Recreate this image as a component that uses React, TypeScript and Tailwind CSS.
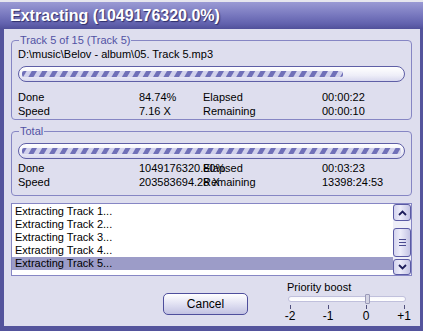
import React from "react";

const stripes =
  "bg-[repeating-linear-gradient(120deg,#7070b8_0px,#7070b8_3.5px,#d2d2ec_4.5px,#d2d2ec_8px,#7070b8_9px)]";

function ProgressBar({ pct }: { pct: number }) {
  return (
    <div className="h-[16px] rounded-full border border-[#5f5fa6] bg-[linear-gradient(180deg,#ffffff_0%,#eeeef8_60%,#d8d8ee_100%)] px-[3px] py-[4px]">
      <div className={`h-full ${stripes} rounded-[2px]`} style={{ width: pct + "%" }} />
    </div>
  );
}

function StatRow({ a, b, c, d }: { a: string; b: string; c: string; d: string }) {
  return (
    <div className="flex leading-[14px] whitespace-nowrap">
      <div className="w-[121px]">{a}</div>
      <div className="w-[64px] overflow-visible">{b}</div>
      <div className="w-[119px]">{c}</div>
      <div>{d}</div>
    </div>
  );
}

function Chevron({ up }: { up?: boolean }) {
  return (
    <svg width="9" height="6" viewBox="0 0 9 6">
      <path
        d={up ? "M1 5 L4.5 1.5 L8 5" : "M1 1 L4.5 4.5 L8 1"}
        fill="none"
        stroke="#1c1c5a"
        strokeWidth="1.8"
      />
    </svg>
  );
}

const btn =
  "border border-[#5a5aa4] rounded-[3px] bg-[linear-gradient(90deg,#d4d4ee_0%,#ececfa_40%,#c4c4e4_100%)] flex items-center justify-center";

export default function App() {
  const tracks = [1, 2, 3, 4, 5];
  return (
    <div
      className="w-[423px] h-[331px] bg-[#54549c] flex flex-col text-[11px] text-black"
      style={{ fontFamily: '"Liberation Sans", Arial, sans-serif' }}
    >
      <div className="h-[2px] bg-[#e6e6ee]" />
      <div className="h-[27px] flex items-center pl-[10px] bg-[linear-gradient(180deg,#9a9ad4_0%,#7a7ac0_45%,#6262ae_80%,#50509a_100%)]">
        <span className="text-white font-bold text-[16px] [text-shadow:1px_1px_1px_#2e2e6a]">
          Extracting (1049176320.0%)
        </span>
      </div>

      <div className="flex-1 ml-[4px] mr-[3px] mb-[5px] bg-[#dedeee] pt-[4px] flex flex-col">
        <fieldset className="ml-[7px] mr-[8px] border border-[#8686c4] rounded-[4px] px-[6px] pb-[1px]">
          <legend className="ml-[1px] px-[1px] leading-[14px] text-[#5252a4]">Track 5 of 15 (Track 5)</legend>
          <div className="leading-[14px]">D:\music\Belov - album\05. Track 5.mp3</div>
          <div className="mt-[5px]">
            <ProgressBar pct={84.74} />
          </div>
          <div className="mt-[8px]">
            <StatRow a="Done" b="84.74%" c="Elapsed" d="00:00:22" />
            <StatRow a="Speed" b="7.16 X" c="Remaining" d="00:00:10" />
          </div>
        </fieldset>

        <fieldset className="mt-[4px] ml-[7px] mr-[8px] border border-[#8686c4] rounded-[4px] px-[6px] pb-[6px]">
          <legend className="ml-[1px] px-[1px] leading-[14px] text-[#5252a4]">Total</legend>
          <div className="mt-[5px]">
            <ProgressBar pct={100} />
          </div>
          <div className="mt-[2px]">
            <StatRow a="Done" b="1049176320.80%" c="Elapsed" d="00:03:23" />
            <StatRow a="Speed" b="203583694.28 X" c="Remaining" d="13398:24:53" />
          </div>
        </fieldset>

        <div className="mt-[7px] ml-[7px] mr-[8px] h-[73px] border border-[#8686c4] bg-white flex">
          <div className="flex-1 pt-[1px]">
            {tracks.map((t) => (
              <div
                key={t}
                className={`h-[13px] leading-[13px] pl-[3px] ${t === 5 ? "bg-[#9c9cc8]" : ""}`}
              >
                Extracting Track {t}...
              </div>
            ))}
          </div>
          <div className="w-[18px] bg-[#eeeef8] flex flex-col">
            <div className={`h-[17px] ${btn}`}>
              <Chevron up />
            </div>
            <div className="flex-1 flex flex-col justify-end pb-[2px]">
              <div className={`h-[29px] ${btn} flex-col gap-[2px]`}>
                <div className="w-[7px] h-[1px] bg-[#4a4a90]" />
                <div className="w-[7px] h-[1px] bg-[#4a4a90]" />
                <div className="w-[7px] h-[1px] bg-[#4a4a90]" />
              </div>
            </div>
            <div className={`h-[16px] ${btn}`}>
              <Chevron />
            </div>
          </div>
        </div>

        <div className="flex items-start">
          <button className="ml-[159px] mt-[17px] w-[85px] h-[22px] rounded-[5px] border border-[#4e4e9c] bg-[linear-gradient(180deg,#ffffff_0%,#e4e4f4_45%,#c2c2e2_100%)] text-[12px]">
            Cancel
          </button>
          <div className="ml-[36px] mt-[4px] w-[126px]">
            <div className="leading-[14px] pl-[3px]">Priority boost</div>
            <div className="relative mt-[2px] ml-[4px] w-[118px] h-[6px] rounded-[3px] border border-[#c0c0dc] bg-[linear-gradient(180deg,#f8f8fc_0%,#ffffff_100%)]">
              <div className="absolute left-[76px] top-[-3px] w-[5px] h-[10px] rounded-[1px] border border-[#9a9ab8] bg-[#d4d4e4]" />
            </div>
            <div className="flex justify-between mt-[3px]">
              {["-2", "-1", "0", "+1"].map((l) => (
                <div key={l} className="w-[12px] flex flex-col items-center">
                  <div className="w-[1px] h-[4px] bg-[#50507c]" />
                  <div className="leading-[13px] mt-[1px] text-[12px]">{l}</div>
                </div>
              ))}
            </div>
          </div>
        </div>
      </div>
    </div>
  );
}
